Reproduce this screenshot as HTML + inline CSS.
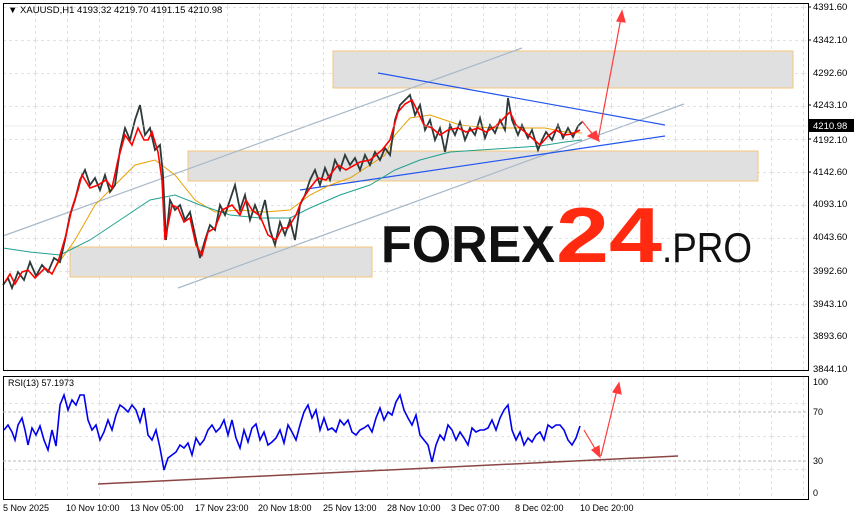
<!DOCTYPE html>
<html><head><meta charset="utf-8"><style>
body{margin:0;background:#fff;width:854px;height:520px;overflow:hidden;font-family:"Liberation Sans",sans-serif}
svg{position:absolute;left:0;top:0}
.ax{font-size:9.5px;fill:#000;font-family:"Liberation Sans",sans-serif}
</style></head><body>
<svg width="854" height="520" viewBox="0 0 854 520">
<defs>
<pattern id="g" width="32" height="33" patternUnits="userSpaceOnUse" x="3" y="7">
<path d="M0.5 0V33M0 0.5H32" stroke="#e2e2e2" stroke-dasharray="3 3" fill="none"/>
</pattern>
</defs>
<rect x="3" y="3" width="805" height="367" fill="url(#g)"/>
<rect x="3" y="376" width="805" height="123" fill="url(#g)"/>
<rect x="333" y="51" width="460" height="37" fill="#e0e0e0" stroke="#f6c77a"/>
<rect x="188" y="151" width="570" height="30" fill="#e0e0e0" stroke="#f6c77a"/>
<rect x="70" y="247" width="302" height="30" fill="#e0e0e0" stroke="#f6c77a"/>
<line x1="3" y1="236" x2="522" y2="48" stroke="#a8b8c8" stroke-width="1.2"/>
<line x1="178" y1="288" x2="684" y2="104" stroke="#a8b8c8" stroke-width="1.2"/>
<line x1="378" y1="73" x2="665" y2="125" stroke="#2255ee" stroke-width="1.2"/>
<line x1="300" y1="190" x2="665" y2="136" stroke="#2255ee" stroke-width="1.2"/>
<polyline fill="none" stroke="#e8a000" stroke-width="1" points="55,268 75,240 95,205 115,185 135,165 155,160 175,175 195,200 215,212 240,210 265,212 290,210 310,195 330,185 350,178 370,165 385,155 395,135 410,118 430,115 460,125 490,128 520,128 545,128 565,132 582,133"/>
<polyline fill="none" stroke="#20a090" stroke-width="1" points="3,248 30,252 60,255 90,240 120,220 150,200 175,195 200,205 230,215 260,218 290,218 310,208 340,195 370,185 395,170 420,160 450,152 480,150 510,148 540,146 565,142 582,140"/>
<polyline fill="none" stroke="#2d3a3a" stroke-width="1.8" points="3,285 8,278 12,288 18,272 24,280 30,262 36,276 42,265 48,272 54,258 60,262 65,240 70,215 75,200 80,180 85,170 90,185 95,178 100,190 105,175 110,192 115,185 120,150 125,128 130,140 135,120 140,105 145,135 150,128 155,150 160,145 163,175 166,240 170,200 175,210 180,205 185,220 190,212 195,235 200,258 205,240 210,225 215,230 220,205 225,215 230,200 235,185 240,210 245,195 250,220 255,205 260,218 265,200 270,230 275,245 280,222 285,235 290,220 295,240 300,205 305,195 310,180 315,170 320,185 325,168 330,180 335,160 340,170 345,155 350,165 355,158 360,170 365,155 370,165 375,152 380,160 385,148 390,155 395,120 400,105 405,100 410,95 415,115 420,105 425,130 430,120 435,140 440,128 445,152 450,125 455,135 460,122 465,140 470,128 475,135 480,118 485,138 490,125 495,133 500,120 505,130 508,98 512,120 518,135 522,125 528,138 532,130 538,150 542,140 546,132 552,140 558,125 563,138 568,128 573,137 578,126 582,122"/>
<polyline fill="none" stroke="#ff0000" stroke-width="1.6" points="5,282 10,274 15,284 22,272 28,270 35,278 45,268 52,274 58,262 66,235 72,208 78,190 82,175 90,188 98,185 106,180 112,188 118,160 125,135 132,145 138,128 144,140 148,140 152,132 158,152 162,180 165,240 172,205 178,208 184,222 190,218 196,245 202,255 208,232 215,228 222,210 232,205 240,215 246,200 252,210 260,216 268,235 276,240 282,228 288,228 296,215 302,200 310,188 318,178 326,180 338,165 346,170 360,162 370,160 382,150 390,140 398,112 405,104 412,100 418,112 424,125 432,128 440,135 448,130 458,128 466,132 478,128 486,132 496,126 504,118 510,112 516,125 525,132 532,138 540,145 548,136 556,130 564,135 572,134 580,130"/>
<g stroke="#ff3b3b" stroke-width="1.2" fill="#ff3b3b">
<line x1="582" y1="121" x2="594" y2="136"/>
<polygon points="599,141 588,136 596,131"/>
<line x1="598" y1="140" x2="621" y2="18"/>
<polygon points="622,11 617,21 625,22"/>
</g>
<line x1="3" y1="126" x2="808" y2="126" stroke="#dcdcdc" stroke-width="0.6"/>
<rect x="3.5" y="3.5" width="805" height="367" fill="none" stroke="#000"/>
<rect x="3.5" y="376.5" width="805" height="123" fill="none" stroke="#000"/>
<text x="8" y="13" class="ax">▼ XAUUSD,H1  4193.32 4219.70 4191.15 4210.98</text>
<g class="ax">
<text x="813" y="10">4391.60</text><text x="813" y="43">4342.10</text><text x="813" y="76">4292.60</text>
<text x="813" y="108">4243.10</text><text x="813" y="143">4192.10</text><text x="813" y="175">4142.60</text>
<text x="813" y="207">4093.10</text><text x="813" y="240">4043.60</text><text x="813" y="274">3992.60</text>
<text x="813" y="307">3943.10</text><text x="813" y="339">3893.60</text><text x="813" y="372">3844.10</text>
</g>
<rect x="809" y="119" width="45" height="13" fill="#000"/>
<text x="813" y="129" class="ax" style="fill:#fff">4210.98</text>
<g stroke="#000"><line x1="808" y1="7" x2="811" y2="7"/><line x1="808" y1="40" x2="811" y2="40"/><line x1="808" y1="105" x2="811" y2="105"/><line x1="808" y1="139" x2="811" y2="139"/><line x1="808" y1="172" x2="811" y2="172"/></g>
<!-- logo -->
<text x="381" y="262" font-family="Liberation Sans" font-weight="bold" font-size="52" fill="#111" textLength="174" lengthAdjust="spacingAndGlyphs">FOREX</text>
<text x="556" y="262" font-family="Liberation Sans" font-weight="bold" font-size="78" fill="#ff2a10" textLength="106" lengthAdjust="spacingAndGlyphs">24</text>
<text x="662" y="262" font-family="Liberation Sans" font-size="42" fill="#111" textLength="90" lengthAdjust="spacingAndGlyphs">.PRO</text>
<!-- RSI -->
<line x1="3" y1="412" x2="808" y2="412" stroke="#bbb" stroke-dasharray="3 2"/>
<line x1="3" y1="461" x2="808" y2="461" stroke="#bbb" stroke-dasharray="3 2"/>
<text x="8" y="386" class="ax" style="font-size:9px">RSI(13) 57.1973</text>
<g class="ax" style="font-size:9px"><text x="813" y="385">100</text><text x="813" y="415">70</text><text x="813" y="464">30</text><text x="813" y="496">0</text></g>
<line x1="98" y1="484" x2="678" y2="456" stroke="#8b4545" stroke-width="1.5"/>
<polyline fill="none" stroke="#0000ee" stroke-width="1.6" points="4,430 8,425 12,432 15,440 18,425 22,418 25,430 28,445 32,428 36,435 40,426 44,440 48,450 52,430 56,446 60,405 64,395 68,410 72,400 76,405 80,395 84,395 88,420 92,430 96,425 100,440 104,432 108,420 112,430 116,415 120,405 124,408 128,412 132,405 136,410 140,422 144,408 148,435 152,440 156,430 160,448 164,470 168,458 172,455 176,452 180,445 184,448 188,443 192,455 196,438 200,445 204,440 208,430 212,425 216,432 220,428 224,420 228,435 232,420 236,438 240,448 244,430 248,442 252,428 256,424 260,440 264,432 268,445 272,442 276,438 280,430 284,443 288,425 292,432 296,440 300,425 304,412 308,405 312,418 316,410 320,430 324,418 328,430 332,428 336,432 340,420 344,425 348,420 352,432 356,435 360,430 364,428 368,425 372,432 376,418 380,408 384,420 388,412 392,415 396,402 400,395 404,410 408,418 412,425 416,415 420,435 424,440 428,445 432,462 436,445 440,435 444,440 448,425 452,430 456,440 460,432 464,438 468,445 472,428 476,432 480,430 484,430 488,428 492,420 496,430 500,418 504,410 508,405 512,430 516,440 520,432 524,445 528,438 532,442 536,435 540,432 544,440 548,425 552,428 556,425 560,425 564,430 568,440 572,445 576,438 580,426"/>
<g stroke="#ff3b3b" stroke-width="1.2" fill="#ff3b3b">
<line x1="584" y1="430" x2="597" y2="452"/><polygon points="600,457 592,450 599,446"/>
<line x1="601" y1="456" x2="617" y2="390"/><polygon points="619,383 613,392 621,394"/>
</g>
<g class="ax" style="font-size:9px">
<text x="3" y="511">5 Nov 2025</text><text x="66" y="511">10 Nov 10:00</text><text x="130" y="511">13 Nov 05:00</text>
<text x="195" y="511">17 Nov 23:00</text><text x="258" y="511">20 Nov 18:00</text><text x="323" y="511">25 Nov 13:00</text>
<text x="387" y="511">28 Nov 10:00</text><text x="451" y="511">3 Dec 07:00</text><text x="515" y="511">8 Dec 02:00</text>
<text x="580" y="511">10 Dec 20:00</text>
</g>
</svg>
</body></html>
